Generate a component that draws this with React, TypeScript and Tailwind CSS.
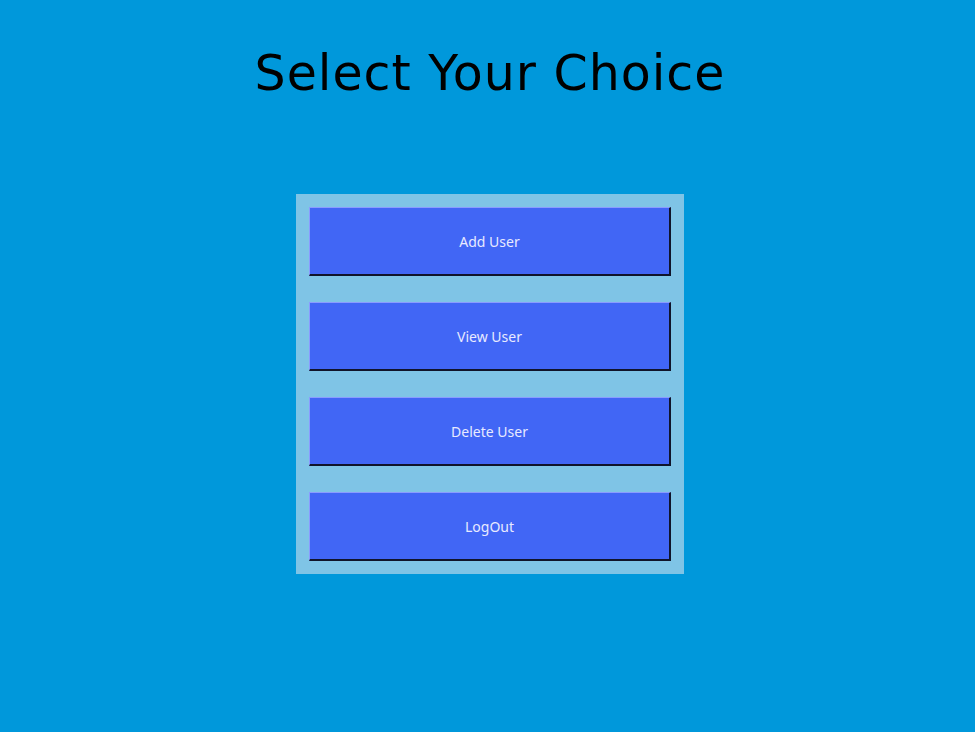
// App.tsx — user menu screen

const CHOICES = ["Add User", "View User", "Delete User", "LogOut"];

export default function App() {
  return (
    <main
      className="w-[975px] h-[732px] bg-[#0098db] flex flex-col items-center"
      style={{ fontFamily: '"DejaVu Sans", Verdana, sans-serif' }}
    >
      <h1 className="mt-[44px] ml-[5px] text-[49px] leading-[60px] tracking-[1px] text-black">Select Your Choice</h1>

      {/* Menu panel */}
      <div className="mt-[90px] ml-[5px] w-[388px] bg-[#7fc4e6] p-[13px] flex flex-col gap-[26px]">
        {CHOICES.map((c) => (
          <button
            key={c}
            className="h-[69px] w-full bg-[#4166f5] text-[#e8eaff] text-[14px] border-t border-l border-t-[#8a9cff] border-l-[#8a9cff] border-r-2 border-b-2 border-r-[#10142a] border-b-[#10142a]"
            style={{ fontFamily: '"Noto Sans", Tahoma, sans-serif' }}
          >
            {c}
          </button>
        ))}
      </div>
    </main>
  );
}
